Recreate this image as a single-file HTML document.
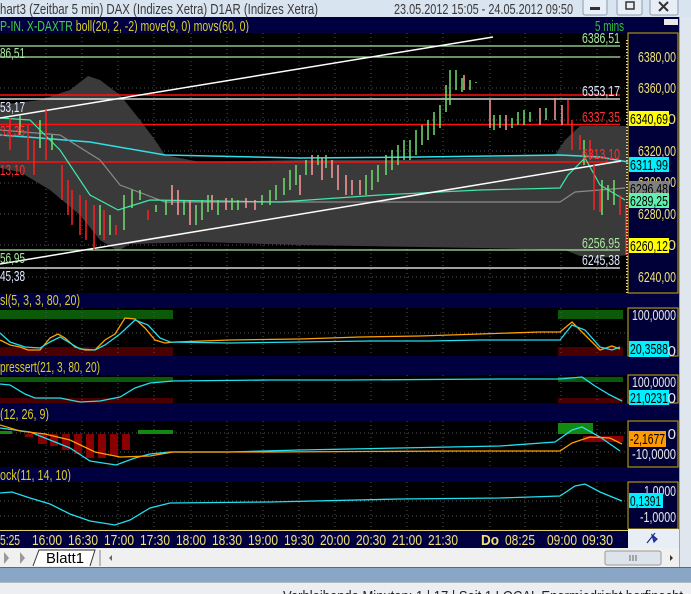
<!DOCTYPE html>
<html><head><meta charset="utf-8"><style>
html,body{margin:0;padding:0;width:691px;height:594px;overflow:hidden;background:#dfe7f0}
svg{display:block}
text{font-family:"Liberation Sans Narrow","Liberation Sans",sans-serif;font-size:15px}
</style></head><body>
<svg width="691" height="594" viewBox="0 0 691 594" xmlns="http://www.w3.org/2000/svg">
<rect x="0" y="0" width="691" height="17" fill="#d9e4f1"/>
<text x="0" y="14" fill="#3a3a3a" textLength="318" lengthAdjust="spacingAndGlyphs">hart3 (Zeitbar 5 min)  DAX (Indizes Xetra) D1AR (Indizes Xetra)</text>
<text x="394" y="14" fill="#3a3a3a" textLength="179" lengthAdjust="spacingAndGlyphs">23.05.2012 15:05 - 24.05.2012 09:50</text>
<g fill="#e8eef6" stroke="#8a9ab0"><rect x="583" y="-2" width="24" height="17" rx="2"/><rect x="617" y="-2" width="25" height="17" rx="2"/><rect x="650" y="-2" width="28" height="17" rx="2"/></g>
<rect x="590" y="7" width="10" height="3" fill="#333"/>
<rect x="626" y="2" width="8" height="7" fill="none" stroke="#333" stroke-width="1.5"/>
<path d="M659 2l9 9M668 2l-9 9" stroke="#333" stroke-width="2"/>
<rect x="679" y="17" width="12" height="555" fill="#dfe6ee"/>
<rect x="679" y="17" width="1" height="550" fill="#9aa8b8"/>
<rect x="0" y="17" width="679" height="512" fill="#000040"/>
<text x="0" y="31" fill="#40d040" textLength="249" lengthAdjust="spacingAndGlyphs">P-IN. X-DAXTR <tspan fill="#d8d020">boll(20, 2, -2) move(9, 0) movs(60, 0)</tspan></text>
<text x="595" y="31" fill="#30c030" textLength="29" lengthAdjust="spacingAndGlyphs">5 mins</text>
<rect x="664" y="19" width="14" height="6" fill="#e8e8e8"/>
<rect x="0" y="33" width="628" height="260" fill="#000"/>
<rect x="628" y="33" width="50" height="260" fill="#000038" stroke="#d0b000" stroke-width="1"/>
<g stroke="#555" stroke-width="1" stroke-dasharray="1,3">
<path d="M46 33V293M82 33V293M118 33V293M154 33V293M191 33V293M227 33V293M263 33V293M299 33V293M335 33V293M371 33V293M407 33V293M443 33V293M490 33V293M525 33V293M561 33V293M597 33V293"/>
<path d="M0 57H628M0 88H628M0 120H628M0 151H628M0 183H628M0 214H628M0 245H628M0 277H628"/>
</g>
<path d="M0 105L40 100L70 90L88 76L100 80L120 95L140 120L155 140L165 155L200 162L300 160L400 160L500 157L555 155L565 140L580 126L628 126L628 255L600 258L580 256L565 250L480 248L300 245L200 242L130 244L118 251L100 240L80 215L50 190L20 172L0 168Z" fill="#3a3a3a"/>
<path d="M0 46H620M0 57H620" stroke="#a8e8a0" stroke-width="1.2"/>
<path d="M0 95H620M0 124.5H620M0 162H620" stroke="#ff1010" stroke-width="1.5"/>
<path d="M0 99H620M0 268H620" stroke="#ffffff" stroke-width="1.2"/>
<path d="M0 250H620" stroke="#a8e8a0" stroke-width="1.2"/>
<polyline points="0,135 40,138 90,142 165,155 300,158 420,157 560,155 600,157 628,162" fill="none" stroke="#30e0e8" stroke-width="1.5"/>
<polyline points="0,130 60,135 100,160 120,185 165,202 560,202 575,192 625,188" fill="none" stroke="#8a8a8a" stroke-width="1.2"/>
<polyline points="0,118 30,120 60,150 90,195 118,210 150,200 280,202 380,195 480,190 560,188 568,175 585,158 600,185 625,200" fill="none" stroke="#40e8a8" stroke-width="1.2"/>
<path d="M0 264L621 161M0 118L493 37" stroke="#fff" stroke-width="1.5"/>
<g stroke-width="1.5" fill="none">
<path stroke="#ff2020" d="M10 118V150M28 125V160M34 140V175M46 110V160M62 165V200M68 180V215M72 190V225M80 195V235M86 200V240M94 205V250M104 210V240M116 225V235M148 210V220M568 100V125M572 120V150M580 135V150M590 140V160M594 165V210M600 190V212M620 195V215M626 205V255"/>
<path stroke="#70e070" d="M20 115V135M40 120V148M52 135V150M100 205V235M110 215V235M124 195V230M132 190V208M140 190V200M156 205V212M166 200V215M184 200V215M196 205V225M202 200V220M208 195V212M218 200V215M232 198V210M238 200V210M262 195V205M270 190V205M276 185V200M284 178V195M290 170V190M296 165V185M306 160V175M318 155V165M326 155V168M366 175V195M372 170V190M378 165V182M386 155V175M392 150V170M398 145V165M404 140V160M410 140V160M416 130V155M422 125V145M428 120V140M434 112V135M440 105V128M446 85V112M450 70V105M456 70V90M462 78V92M470 80V90M476 82V83M494 115V130M500 115V128M512 118V128M518 112V125M524 110V125M530 112V122M546 108V120M584 140V165M602 180V215M608 185V200M614 180V205"/>
<path stroke="#ff9a9a" d="M172 185V205M178 190V215M190 200V225M212 195V210M226 198V210M246 198V208M255 200V210M300 175V195M312 155V175M322 158V180M332 160V178M338 165V190M346 175V195M352 180V195M360 180V195M464 75V90M490 100V128M506 115V130M540 108V125M555 98V120M562 105V125"/>
</g>
<g>
<text x="582" y="43" fill="#a8e8a0" textLength="38" lengthAdjust="spacingAndGlyphs">6386,51</text>
<text x="582" y="96" fill="#e0e8ff" textLength="38" lengthAdjust="spacingAndGlyphs">6353,17</text>
<text x="582" y="122" fill="#ff3030" textLength="38" lengthAdjust="spacingAndGlyphs">6337,35</text>
<text x="582" y="159" fill="#ff3030" textLength="38" lengthAdjust="spacingAndGlyphs">6313,10</text>
<text x="582" y="248" fill="#a8e8a0" textLength="38" lengthAdjust="spacingAndGlyphs">6256,95</text>
<text x="582" y="265" fill="#e0e8ff" textLength="38" lengthAdjust="spacingAndGlyphs">6245,38</text>
<text x="0" y="58" fill="#a8e8a0" textLength="25" lengthAdjust="spacingAndGlyphs">86,51</text>
<text x="0" y="112" fill="#e0e8ff" textLength="25" lengthAdjust="spacingAndGlyphs">53,17</text>
<text x="0" y="136" fill="#ff3030" textLength="25" lengthAdjust="spacingAndGlyphs">37,35</text>
<text x="0" y="175" fill="#ff3030" textLength="25" lengthAdjust="spacingAndGlyphs">13,10</text>
<text x="0" y="263" fill="#a8e8a0" textLength="25" lengthAdjust="spacingAndGlyphs">56,95</text>
<text x="0" y="281" fill="#e0e8ff" textLength="25" lengthAdjust="spacingAndGlyphs">45,38</text>
</g>
<path d="M627 40V293" stroke="#e0d0a0" stroke-width="2" stroke-dasharray="1,2"/>
<g fill="#f0e070">
<text x="638" y="62" textLength="38" lengthAdjust="spacingAndGlyphs">6380,00</text>
<text x="638" y="93" textLength="38" lengthAdjust="spacingAndGlyphs">6360,00</text>
<text x="638" y="156" textLength="38" lengthAdjust="spacingAndGlyphs">6320,00</text>
<text x="638" y="187" textLength="38" lengthAdjust="spacingAndGlyphs">6300,00</text>
<text x="638" y="219" textLength="38" lengthAdjust="spacingAndGlyphs">6280,00</text>
<text x="638" y="282" textLength="38" lengthAdjust="spacingAndGlyphs">6240,00</text>
<text x="676" y="124" text-anchor="end">0</text>
<text x="676" y="250" text-anchor="end">0</text>
</g>
<g>
<rect x="629" y="111" width="40" height="15" fill="#ffff00"/><text x="630" y="124" fill="#000" textLength="38" lengthAdjust="spacingAndGlyphs">6340,69</text>
<rect x="629" y="157" width="40" height="15" fill="#00f0ff"/><text x="630" y="170" fill="#000" textLength="38" lengthAdjust="spacingAndGlyphs">6311,99</text>
<rect x="629" y="181" width="40" height="15" fill="#808080"/><text x="630" y="194" fill="#000" textLength="38" lengthAdjust="spacingAndGlyphs">6296,48</text>
<rect x="629" y="193" width="40" height="15" fill="#60f0b0"/><text x="630" y="206" fill="#000" textLength="38" lengthAdjust="spacingAndGlyphs">6289,25</text>
<rect x="629" y="238" width="40" height="15" fill="#ffff00"/><text x="630" y="251" fill="#000" textLength="38" lengthAdjust="spacingAndGlyphs">6260,12</text>
</g>
<g fill="#d8d020">
<text x="0" y="305" textLength="80" lengthAdjust="spacingAndGlyphs">sl(5, 3, 3, 80, 20)</text>
<text x="0" y="372" textLength="100" lengthAdjust="spacingAndGlyphs">pressert(21, 3, 80, 20)</text>
<text x="0" y="419" textLength="49" lengthAdjust="spacingAndGlyphs">(12, 26, 9)</text>
<text x="0" y="480" textLength="71" lengthAdjust="spacingAndGlyphs">ock(11, 14, 10)</text>
</g>
<rect x="0" y="308" width="628" height="48" fill="#000"/>
<rect x="0" y="375" width="628" height="28" fill="#000"/>
<rect x="0" y="421" width="628" height="46" fill="#000"/>
<rect x="0" y="482" width="628" height="47" fill="#000"/>
<g fill="#000038" stroke="#d0b000"><rect x="628" y="308" width="50" height="48"/><rect x="628" y="375" width="50" height="28"/><rect x="628" y="421" width="50" height="46"/><rect x="628" y="482" width="50" height="47"/></g>
<g fill="#0a5a0a"><rect x="0" y="310" width="173" height="9"/><rect x="558" y="310" width="65" height="9"/><rect x="0" y="377" width="173" height="5"/><rect x="558" y="377" width="65" height="5"/></g>
<g fill="#4a0000"><rect x="0" y="347" width="173" height="9"/><rect x="558" y="347" width="65" height="9"/><rect x="0" y="398" width="173" height="5"/><rect x="558" y="398" width="65" height="5"/></g>
<g stroke="#555" stroke-dasharray="1,3">
<path d="M46 308V356M82 308V356M118 308V356M154 308V356M191 308V356M227 308V356M263 308V356M299 308V356M335 308V356M371 308V356M407 308V356M443 308V356M490 308V356M525 308V356M561 308V356M597 308V356"/>
<path d="M46 375V403M82 375V403M118 375V403M154 375V403M191 375V403M227 375V403M263 375V403M299 375V403M335 375V403M371 375V403M407 375V403M443 375V403M490 375V403M525 375V403M561 375V403M597 375V403"/>
<path d="M46 421V467M82 421V467M118 421V467M154 421V467M191 421V467M227 421V467M263 421V467M299 421V467M335 421V467M371 421V467M407 421V467M443 421V467M490 421V467M525 421V467M561 421V467M597 421V467"/>
<path d="M46 482V529M82 482V529M118 482V529M154 482V529M191 482V529M227 482V529M263 482V529M299 482V529M335 482V529M371 482V529M407 482V529M443 482V529M490 482V529M525 482V529M561 482V529M597 482V529"/>
<path d="M0 333H628M0 433H628M0 452H628M0 501H628M0 516H628"/>
</g>
<polyline points="0,340 10,345 20,347 28,350 40,350 50,338 58,334 65,338 75,347 85,350 95,350 105,340 115,334 125,318 135,319 145,328 155,340 165,343 175,342 230,340 300,339 360,337 420,336 480,334 540,332 560,332 572,322 585,335 600,350 612,346 620,349" fill="none" stroke="#ffa000" stroke-width="1.3"/>
<polyline points="0,333 10,342 25,347 40,348 50,342 60,337 70,343 80,349 95,350 105,345 120,334 135,320 148,325 160,338 170,342 230,343 300,342 370,341 430,341 480,340 560,340 572,325 585,330 600,347 612,350 620,347" fill="none" stroke="#20e0f0" stroke-width="1.3"/>
<polyline points="0,384 10,385 25,394 35,398 60,398 80,402 100,401 120,397 135,388 150,383 173,381 270,380 350,380 500,379 560,379 582,377 595,386 610,395 622,401" fill="none" stroke="#20e0f0" stroke-width="1.3"/>
<g fill="#8a0000"><rect x="25" y="434" width="8" height="3"/><rect x="38" y="434" width="9" height="10"/><rect x="50" y="434" width="8" height="12"/><rect x="62" y="434" width="8" height="16"/><rect x="74" y="434" width="8" height="20"/><rect x="86" y="434" width="8" height="24"/><rect x="98" y="434" width="8" height="24"/><rect x="110" y="434" width="8" height="22"/><rect x="122" y="434" width="8" height="16"/><rect x="583" y="436" width="40" height="6"/></g>
<g fill="#128a12"><rect x="0" y="431" width="12" height="3"/><rect x="138" y="430" width="35" height="4"/><rect x="558" y="423" width="35" height="11"/></g>
<polyline points="0,428 15,430 30,432 50,440 70,448 90,461 116,465 135,458 150,454 170,452 230,452 300,450 400,448 500,446 555,442 572,430 582,427 600,437 620,451" fill="none" stroke="#20e0f0" stroke-width="1.3"/>
<polyline points="0,425 20,431 45,434 70,440 95,452 120,457 150,456 173,452 270,452 460,451 560,451 572,443 590,437 610,438 622,444" fill="none" stroke="#ffa000" stroke-width="1.3"/>
<polyline points="0,493 12,492 30,498 50,504 70,514 90,521 115,525 130,520 150,508 170,503 270,502 400,499 500,498 560,496 575,486 585,484 600,492 622,501" fill="none" stroke="#20e0f0" stroke-width="1.3"/>
<g>
<text x="632" y="320" fill="#e8e8e8" textLength="44" lengthAdjust="spacingAndGlyphs">100,0000</text>
<rect x="629" y="341" width="40" height="16" fill="#00f0ff"/><text x="630" y="354" fill="#000" textLength="38" lengthAdjust="spacingAndGlyphs">20,3588</text><text x="676" y="356" text-anchor="end" fill="#e8e8e8">0</text>
<text x="632" y="387" fill="#e8e8e8" textLength="44" lengthAdjust="spacingAndGlyphs">100,0000</text>
<rect x="629" y="390" width="40" height="15" fill="#00f0ff"/><text x="630" y="403" fill="#000" textLength="38" lengthAdjust="spacingAndGlyphs">21,0231</text><text x="676" y="403" text-anchor="end" fill="#e8e8e8">0</text>
<text x="676" y="439" text-anchor="end" fill="#e8e8e8">0</text>
<text x="632" y="459" fill="#e8e8e8" textLength="44" lengthAdjust="spacingAndGlyphs">-10,0000</text>
<rect x="629" y="431" width="37" height="16" fill="#ff9a00"/><text x="630" y="444" fill="#000" textLength="35" lengthAdjust="spacingAndGlyphs">-2,1677</text>
<text x="644" y="496" fill="#e8e8e8" textLength="32" lengthAdjust="spacingAndGlyphs">1,0000</text>
<rect x="629" y="493" width="34" height="15" fill="#00f0ff"/><text x="630" y="506" fill="#000" textLength="31" lengthAdjust="spacingAndGlyphs">0,1391</text>
<text x="640" y="522" fill="#e8e8e8" textLength="36" lengthAdjust="spacingAndGlyphs">-1,0000</text>
</g>
<rect x="0" y="529" width="628" height="19" fill="#000040"/>
<path d="M0 530.5H628" stroke="#e0d060"/>
<rect x="628" y="529" width="51" height="19" fill="#e8eef6"/>
<path d="M647 543l8-10M652 535l5 4-3 3z" stroke="#203080" fill="#2040e0" stroke-width="1.2"/>
<g fill="#f0e070">
<text x="0" y="545" textLength="20" lengthAdjust="spacingAndGlyphs">5:25</text>
<text x="32" y="545" textLength="30" lengthAdjust="spacingAndGlyphs">16:00</text><text x="68" y="545" textLength="30" lengthAdjust="spacingAndGlyphs">16:30</text><text x="104" y="545" textLength="30" lengthAdjust="spacingAndGlyphs">17:00</text><text x="140" y="545" textLength="30" lengthAdjust="spacingAndGlyphs">17:30</text><text x="176" y="545" textLength="30" lengthAdjust="spacingAndGlyphs">18:00</text><text x="212" y="545" textLength="30" lengthAdjust="spacingAndGlyphs">18:30</text><text x="248" y="545" textLength="30" lengthAdjust="spacingAndGlyphs">19:00</text><text x="284" y="545" textLength="30" lengthAdjust="spacingAndGlyphs">19:30</text><text x="320" y="545" textLength="30" lengthAdjust="spacingAndGlyphs">20:00</text><text x="356" y="545" textLength="30" lengthAdjust="spacingAndGlyphs">20:30</text><text x="392" y="545" textLength="30" lengthAdjust="spacingAndGlyphs">21:00</text><text x="428" y="545" textLength="30" lengthAdjust="spacingAndGlyphs">21:30</text>
<text x="481" y="545" font-weight="bold" textLength="18" lengthAdjust="spacingAndGlyphs">Do</text><text x="505" y="545" textLength="30" lengthAdjust="spacingAndGlyphs">08:25</text><text x="547" y="545" textLength="30" lengthAdjust="spacingAndGlyphs">09:00</text><text x="582" y="545" textLength="31" lengthAdjust="spacingAndGlyphs">09:30</text>
</g>
<rect x="0" y="548" width="679" height="19" fill="#f0f0f0"/>
<path d="M4 552l5 6-5 6zM20 552l5 6-5 6z" fill="#999"/>
<path d="M33 566L39 550H95L90 566" fill="#fff" stroke="#333"/>
<text x="46" y="563" fill="#000" textLength="38" lengthAdjust="spacingAndGlyphs">Blatt1</text>
<rect x="99" y="550" width="2" height="16" fill="#bbb"/>
<path d="M109 558l3-3v6z" fill="#666"/>
<rect x="605" y="551" width="56" height="14" rx="2" fill="#dde3ea" stroke="#999"/>
<path d="M630 555V561M633 555V561M636 555V561" stroke="#666"/>
<path d="M670 555l3 3-3 3z" fill="#333"/>
<rect x="0" y="567" width="691" height="1.5" fill="#606870"/>
<rect x="0" y="568" width="691" height="14" fill="#8aa6c6"/>
<rect x="0" y="582" width="691" height="12" fill="#eceef2"/>
<rect x="0" y="582" width="691" height="1" fill="#b0b8c4"/>
<text x="283" y="601" fill="#222" textLength="400" lengthAdjust="spacingAndGlyphs">Verbleibende Minuten: 1 | 17 | Seit 1 LOCAL Enormiedright berfinecht</text>
</svg>
</body></html>
